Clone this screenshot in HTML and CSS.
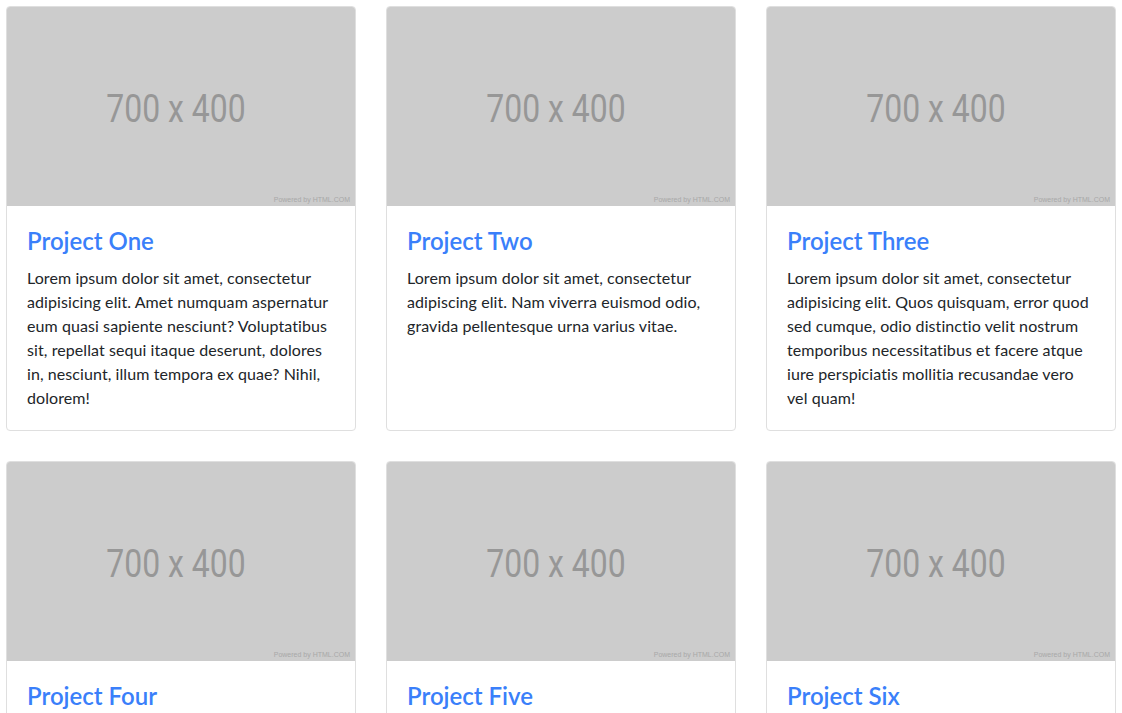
FILE: index.html
```html
<!DOCTYPE html>
<html lang="en">
<head>
<meta charset="utf-8">
<title>Projects</title>
<link rel="stylesheet" href="styles.css">
</head>
<body>
<main class="grid">
  <article class="card">
    <div class="thumb"><span class="size">700 x 400</span><span class="powered">Powered by HTML.COM</span></div>
    <div class="card-body">
      <h4 class="card-title"><a href="#">Project One</a></h4>
      <p class="card-text">Lorem ipsum dolor sit amet, consectetur adipisicing elit. Amet numquam aspernatur eum quasi sapiente nesciunt? Voluptatibus sit, repellat sequi itaque deserunt, dolores in, nesciunt, illum tempora ex quae? Nihil, dolorem!</p>
    </div>
  </article>
  <article class="card">
    <div class="thumb"><span class="size">700 x 400</span><span class="powered">Powered by HTML.COM</span></div>
    <div class="card-body">
      <h4 class="card-title"><a href="#">Project Two</a></h4>
      <p class="card-text">Lorem ipsum dolor sit amet, consectetur adipiscing elit. Nam viverra euismod odio, gravida pellentesque urna varius vitae.</p>
    </div>
  </article>
  <article class="card">
    <div class="thumb"><span class="size">700 x 400</span><span class="powered">Powered by HTML.COM</span></div>
    <div class="card-body">
      <h4 class="card-title"><a href="#">Project Three</a></h4>
      <p class="card-text">Lorem ipsum dolor sit amet, consectetur adipisicing elit. Quos quisquam, error quod sed cumque, odio distinctio velit nostrum temporibus necessitatibus et facere atque iure perspiciatis mollitia recusandae vero vel quam!</p>
    </div>
  </article>
  <article class="card">
    <div class="thumb"><span class="size">700 x 400</span><span class="powered">Powered by HTML.COM</span></div>
    <div class="card-body">
      <h4 class="card-title"><a href="#">Project Four</a></h4>
      <p class="card-text">Lorem ipsum dolor sit amet, consectetur adipisicing elit. Amet numquam aspernatur eum quasi sapiente nesciunt? Voluptatibus sit, repellat sequi itaque deserunt, dolores in, nesciunt, illum tempora ex quae? Nihil, dolorem!</p>
    </div>
  </article>
  <article class="card">
    <div class="thumb"><span class="size">700 x 400</span><span class="powered">Powered by HTML.COM</span></div>
    <div class="card-body">
      <h4 class="card-title"><a href="#">Project Five</a></h4>
      <p class="card-text">Lorem ipsum dolor sit amet, consectetur adipiscing elit. Nam viverra euismod odio, gravida pellentesque urna varius vitae.</p>
    </div>
  </article>
  <article class="card">
    <div class="thumb"><span class="size">700 x 400</span><span class="powered">Powered by HTML.COM</span></div>
    <div class="card-body">
      <h4 class="card-title"><a href="#">Project Six</a></h4>
      <p class="card-text">Lorem ipsum dolor sit amet, consectetur adipisicing elit. Quos quisquam, error quod sed cumque, odio distinctio velit nostrum temporibus necessitatibus et facere atque iure perspiciatis mollitia recusandae vero vel quam!</p>
    </div>
  </article>
</main>
</body>
</html>
```
FILE: styles.css
```css
html, body {
  margin: 0;
  padding: 0;
  background: #fff;
}
body {
  font-family: Lato, "Open Sans", sans-serif;
  font-size: 16px;
  line-height: 24px;
  letter-spacing: 0.08px;
  color: #212529;
}
.grid {
  display: grid;
  grid-template-columns: repeat(3, 350px);
  column-gap: 30px;
  row-gap: 30px;
  padding: 6px;
}
.card {
  border: 1px solid #dfdfdf;
  border-radius: 4px;
  background: #fff;
  overflow: hidden;
}
.thumb {
  position: relative;
  height: 199px;
  background: #cccccc;
  display: flex;
  align-items: center;
  justify-content: center;
}
.size {
  font-family: Roboto, "Liberation Sans", sans-serif;
  font-size: 38px;
  letter-spacing: 0;
  color: #979797;
  line-height: 1;
  transform: scaleX(0.84);
  margin: 4px 10px 0 0;
}
.powered {
  position: absolute;
  right: 5px;
  bottom: 3px;
  font-family: "Liberation Sans", sans-serif;
  font-size: 7px;
  letter-spacing: 0;
  line-height: 1;
  color: #a8a8a8;
}
.card-body {
  padding: 21px 20px 20px;
}
.card-title {
  margin: 0 0 11px;
  font-size: 24px;
  line-height: 28px;
  font-weight: 600;
  letter-spacing: 0;
}
.card-title a {
  color: #3a7ffa;
  text-decoration: none;
}
.card-text {
  margin: 0;
}
```
